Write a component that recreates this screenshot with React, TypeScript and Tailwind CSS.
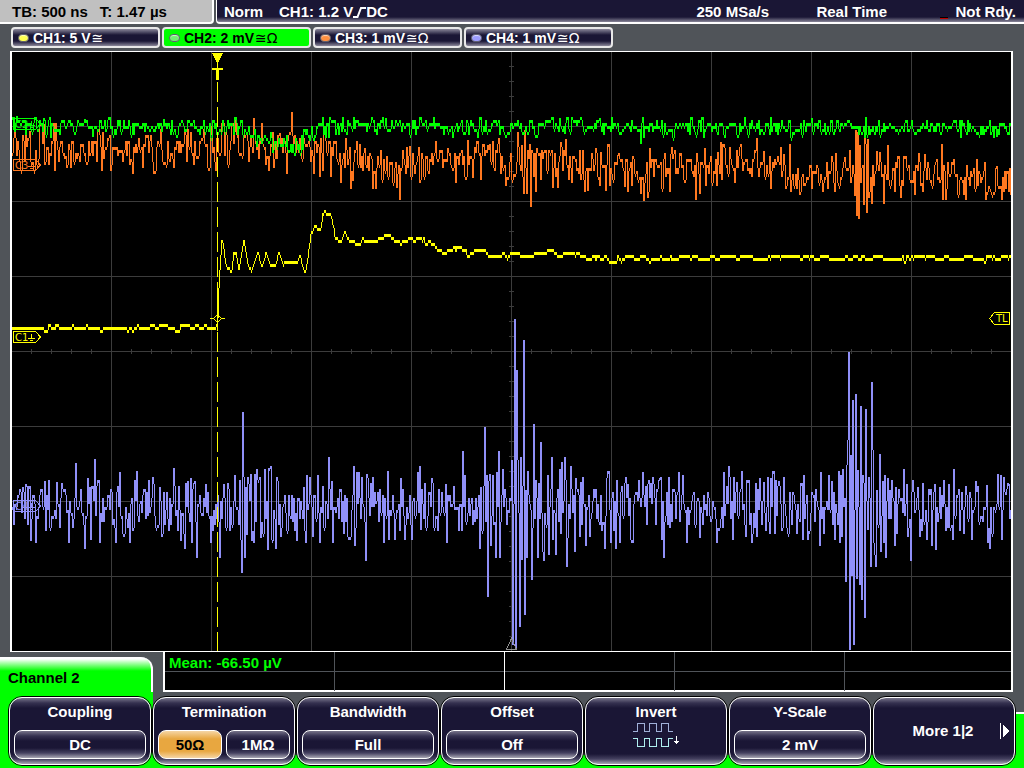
import type { ReactNode } from "react";
import clsx from "clsx";

type Point = [number, number];

const PLOT = { left: 12, top: 52, right: 1011, bottom: 651 };

const CHANNELS = [
    { id: "CH1", scale: "5 V", coupling: "≅", dot: "bg-[#ffff50]" },
    { id: "CH2", scale: "2 mV", coupling: "≅Ω", dot: "bg-[#70f070]", active: true },
    { id: "CH3", scale: "1 mV", coupling: "≅Ω", dot: "bg-[#ff9040]" },
    { id: "CH4", scale: "1 mV", coupling: "≅Ω", dot: "bg-[#9c9cff]" },
];

const C1_SHAPE: Point[] = [
    [12, 327], [216, 327], [217, 320], [218, 289], [219, 271], [221, 241], [222, 243], [225, 265], [227, 269], [231, 268], [233, 251], [235, 251], [238, 269], [241, 252], [243, 241],
    [247, 264], [251, 269], [257, 251], [261, 266], [265, 253], [268, 264], [275, 265], [278, 253], [282, 265], [285, 260], [292, 260], [296, 263], [299, 257],
    [304, 275], [307, 258], [310, 235], [314, 224], [317, 230], [320, 228], [322, 212], [328, 212], [331, 219], [334, 235], [338, 241], [341, 241], [344, 230],
    [348, 239], [352, 242], [357, 244], [363, 236], [370, 241], [382, 239], [387, 235], [395, 242], [405, 239], [415, 239], [417, 234], [423, 241], [427, 244],
    [432, 242], [437, 249], [442, 253], [447, 251], [452, 247], [460, 247], [466, 252], [470, 255], [479, 251], [490, 253], [507, 255], [520, 253], [530, 254],
    [540, 251], [553, 251], [560, 253], [571, 251], [582, 255], [600, 257], [1011, 257],
];

const C2_SHAPE: Point[] = [
    [12, 126], [40, 125], [60, 127], [200, 127], [243, 127], [252, 135], [262, 139], [272, 144], [300, 145], [305, 137], [312, 132], [325, 130], [345, 126], [430, 125], [450, 128], [520, 127], [560, 125], [610, 125], [650, 127], [1011, 128],
];

const C3_SHAPE: Point[] = [
    [12, 148], [70, 150], [150, 150], [200, 146], [260, 144], [310, 147], [330, 150], [345, 163], [400, 168], [430, 163], [470, 158], [512, 162], [560, 163],
    [610, 168], [650, 170], [700, 172], [740, 163], [775, 166], [800, 177], [850, 172], [880, 172], [910, 176], [935, 168], [960, 178], [1011, 180],
];

const C4_SHAPE: Point[] = [[12, 507], [1011, 507]];

// Samples that stand out of the noise, as [x, y]
const C2_SPIKES: Point[] = [[17, 116], [44, 118], [85, 119], [93, 137], [164, 119], [290, 152], [386, 118], [453, 138], [560, 118], [565, 134], [600, 118], [641, 144], [644, 138], [704, 138], [725, 138], [812, 118], [865, 138], [997, 137]];

const C3_SPIKES: Point[] = [
    [15, 132], [30, 131], [44, 124], [55, 171], [102, 171], [133, 174], [143, 168], [188, 129], [194, 165], [236, 118], [254, 118], [280, 133], [292, 112], [293, 136],
    [314, 174], [320, 177], [331, 177], [353, 181], [365, 148], [373, 189], [376, 189], [397, 188], [400, 200], [407, 147], [410, 146], [420, 183], [448, 148],
    [456, 183], [468, 140], [473, 178], [488, 145], [512, 180], [522, 145], [524, 194], [525, 130], [527, 194], [528, 150], [531, 207], [532, 150], [536, 192], [537, 148], [541, 180], [544, 152],
    [553, 188], [558, 188], [561, 142], [566, 139], [588, 191], [596, 148], [601, 152], [606, 191], [618, 155], [625, 187], [641, 194], [644, 201], [650, 148],
    [671, 154], [674, 154], [696, 200], [700, 194], [705, 148], [718, 152], [721, 142], [725, 148], [756, 151], [764, 151], [771, 189], [784, 154], [801, 192], [845, 157],
    [855, 196], [856, 130], [857, 216], [858, 132], [859, 219], [860, 145], [864, 205], [865, 130], [867, 213], [868, 139], [869, 198], [872, 204], [877, 151], [880, 152], [884, 204],
    [888, 145], [901, 198], [905, 157], [925, 154], [943, 200], [946, 200], [966, 200], [986, 200], [997, 166], [1002, 200],
];

const C4_SPIKES: Point[] = [
    [23, 487], [26, 484], [36, 543], [31, 541], [45, 481], [57, 482], [69, 543], [76, 463], [88, 478], [90, 487], [91, 540], [120, 472], [135, 480], [137, 471], [128, 528], [154, 484], [160, 487], [163, 534],
    [181, 541], [188, 481], [191, 478], [192, 543], [195, 481], [197, 558], [206, 484], [211, 543], [220, 558], [224, 484], [235, 475], [240, 480], [242, 573], [243, 412], [245, 558], [246, 487], [247, 535],
    [241, 540], [249, 484], [252, 541], [257, 469], [261, 538], [265, 469], [268, 550], [271, 466], [273, 541], [278, 481], [281, 537], [297, 541], [304, 487], [306, 543], [307, 475], [313, 537], [318, 475],
    [320, 543], [329, 457], [332, 481], [333, 543], [354, 466], [355, 546], [357, 472], [359, 472], [366, 561], [368, 478], [384, 543], [389, 540], [401, 478], [418, 472], [420, 466], [421, 530],
    [432, 478], [447, 543], [446, 484], [463, 451], [465, 475], [480, 549], [481, 487], [485, 427], [486, 522], [487, 475], [488, 597], [489, 481], [491, 546], [493, 475], [494, 525], [496, 558], [497, 472],
    [499, 451], [500, 558], [503, 469], [512, 460], [513, 645], [515, 319], [516, 650], [517, 370], [518, 460], [520, 627], [521, 457], [522, 560], [524, 340], [525, 615], [526, 490], [527, 558], [528, 471],
    [532, 580], [534, 424], [536, 480], [538, 558], [541, 442], [543, 552], [544, 561], [548, 475], [549, 555], [552, 457], [553, 540], [556, 555], [560, 469], [561, 534], [565, 457], [567, 567], [568, 538],
    [571, 466], [575, 552], [576, 478], [581, 482], [586, 546], [590, 537], [607, 478], [611, 543], [616, 549], [628, 484], [633, 543], [643, 472], [648, 484], [654, 484], [660, 478], [664, 558], [679, 472],
    [683, 475], [700, 538], [724, 472], [729, 466], [733, 540], [737, 482], [746, 537], [752, 543], [760, 478], [764, 482], [770, 534], [771, 478], [775, 534], [779, 481], [797, 534], [804, 475], [808, 540],
    [821, 472], [829, 475], [832, 481], [840, 543], [841, 475], [843, 469], [846, 582], [847, 465], [848, 440], [849, 352], [850, 650], [851, 455], [852, 576], [853, 400], [854, 645], [856, 394], [857, 579],
    [858, 470], [860, 585], [861, 406], [862, 600], [863, 475], [865, 618], [866, 409], [868, 530], [871, 567], [872, 382], [873, 450], [875, 555], [876, 567], [877, 490], [880, 454], [881, 552], [883, 481],
    [885, 475], [886, 558], [888, 478], [890, 490], [895, 546], [896, 487], [904, 469], [907, 484], [908, 537], [911, 561], [918, 487], [920, 537], [927, 540], [936, 550], [935, 484], [940, 487], [949, 484],
    [953, 540], [954, 469], [964, 534], [976, 481], [988, 543], [987, 485], [1001, 475], [1002, 540], [1009, 484],
];

const seededRandom = (seed: number) => () => {
    seed = (seed + 0x6d2b79f5) | 0;
    let t = Math.imul(seed ^ (seed >>> 15), 1 | seed);
    t = (t + Math.imul(t ^ (t >>> 7), 61 | t)) ^ t;
    return ((t ^ (t >>> 14)) >>> 0) / 4294967296;
};

const interpolate = (shape: Point[], x: number) => {
    const i = Math.max(1, shape.findIndex(([px]) => px >= x));
    const [x0, y0] = shape[i - 1];
    const [x1, y1] = shape[i];
    return y0 + ((y1 - y0) * (x - x0)) / (x1 - x0);
};

// One vertical stroke per pixel column, levels are quantised to 3px steps
const buildTrace = (shape: Point[], noise: number, seed: number, rate: number, spikes: Point[] = []) => {
    const random = seededRandom(seed);
    const peaks = new Map(spikes);
    let offset = 0;
    let prev: number | null = null;
    let d = "";
    for (let x = PLOT.left; x < PLOT.right; x++) {
        if (random() < rate) offset = (random() + random() + random() - 1.5) * noise;
        const y = peaks.get(x + 1) ?? Math.round((interpolate(shape, x) + offset) / 3) * 3;
        const from = Math.min(y, prev ?? y);
        const to = Math.max(y, prev ?? y, from + 3);
        d += `M${x + 0.5} ${from}V${Math.min(to, PLOT.bottom)}`;
        prev = y;
    }
    return d;
};

const TRACES = [
    { color: "#9090f8", d: buildTrace(C4_SHAPE, 34, 41, 0.85, C4_SPIKES) },
    { color: "#ff7820", d: buildTrace(C3_SHAPE, 22, 7, 0.8, C3_SPIKES) },
    { color: "#00ff00", d: buildTrace(C2_SHAPE, 9, 13, 0.75, C2_SPIKES) },
    { color: "#ffff00", d: buildTrace(C1_SHAPE, 3, 5, 0.35) },
];

const GROUND_TAGS = [
    { label: "C2", y: 118, color: "#00ff00" },
    { label: "C3", y: 159, color: "#ff7820" },
    { label: "C1", y: 331, color: "#ffff00" },
    { label: "C4", y: 500, color: "#9090f8" },
];

const range = (from: number, to: number, step: number) => Array.from({ length: Math.floor((to - from) / step) + 1 }, (_, i) => from + i * step);

const GRID = [
    ...range(111, 911, 100).map((x) => `M${x}.5 52V651`),
    ...range(126, 576, 75).map((y) => `M12 ${y}.5H1011`),
    ...range(66, 636, 15).map((y) => `M509 ${y}.5H514`),
    ...range(31, 991, 20).map((x) => `M${x}.5 349V354`),
].join("");

const Display = () => (
    <svg viewBox="12 52 999 599" preserveAspectRatio="none" shapeRendering="crispEdges" fill="none" className="block h-[599px] w-full bg-black font-normal" role="img" aria-label="Waveforms">
        <path d={GRID} stroke="#3c3c3c" />
        {TRACES.map((trace) => (
            <path key={trace.color} d={trace.d} stroke={trace.color} />
        ))}
        {GROUND_TAGS.map((tag) => (
            <g key={tag.label} stroke={tag.color}>
                <path d={`M13.5 ${tag.y + 0.5}h22l5 5.5l-5 5.5h-22z`} />
                <path d={`M31.5 ${tag.y + 3}v5M28 ${tag.y + 7.5}h7M30 ${tag.y + 9.5}h3`} />
                <text x="15" y={tag.y + 10} fill={tag.color} stroke="none" fontSize="10" fontFamily="DejaVu Sans, sans-serif">
                    {tag.label}
                </text>
            </g>
        ))}
        <g stroke="#ffff00">
            <path d="M217.5 82V651" strokeDasharray="20 5" />
            <path d="M217.5 286V331" />
            <path d="M212 53h11l-5 10h-1z" fill="#ffff00" stroke="none" />
            <path d="M217.5 63v5M212 68.5h11M212 69.5h11M217.5 68v12M216.5 68v12M218.5 68v12" />
            <path d="M210 318.5h4M221 318.5h4M213.5 318.5l4-4l4 4l-4 4z" />
            <path d="M1009.5 312.5v12h-15l-5-6l5-6z" />
            <text x="996" y="322" fill="#ffff00" stroke="none" fontSize="10" fontFamily="DejaVu Sans, sans-serif">
                TL
            </text>
        </g>
        <path d="M506.5 649.5h10l-5-11z" stroke="#909090" />
    </svg>
);

const PANEL_FADE = "bg-[linear-gradient(to_bottom,#77748a,#353150_5px,#1a1635_10px,#1a1635_calc(100%-10px),#454160_calc(100%-5px),#aaa8b5)]";

const MenuKey = ({ title, children }: { title: string; children: ReactNode }) => (
    <div className="h-[70px] flex-1 rounded-[14px] border border-black">
        <div className={clsx("flex h-full flex-col items-center rounded-[13px] border border-white px-1 text-white", PANEL_FADE)}>
            <span className="mt-1 leading-5">{title}</span>
            <div className="mt-2 flex w-full gap-1">{children}</div>
        </div>
    </div>
);

const ValueButton = ({ selected, children }: { selected?: boolean; children: ReactNode }) => (
    <button
        type="button"
        className={clsx(
            "h-[29px] flex-1 rounded-lg border border-white leading-none",
            selected ? "bg-[linear-gradient(to_bottom,#f5d5a5,#e8a740_8px,#e8a740_20px,#f5d5a5)] text-black" : clsx("text-white", PANEL_FADE),
        )}
    >
        {children}
    </button>
);

const InvertIcon = () => (
    <svg width="48" height="26" viewBox="0 0 48 26" fill="none" shapeRendering="crispEdges" className="mx-auto -mt-2">
        <path d="M1 9.500h4v-8h7v8h5v-8h7v8h5v-8h7v8h5" stroke="#a0b0d8" />
        <path d="M1 16.500h4v8h7v-8h5v8h7v-8h5v8h7v-8h5" stroke="#b0f0f0" />
        <path d="M44.500 14v8M42 19.500h5M43 20.500h3" stroke="#fff" />
    </svg>
);

export default function App() {
    return (
        <div className="flex min-h-screen flex-col bg-[#505459] font-['Liberation_Sans',Arial,sans-serif] text-[15px] font-bold whitespace-nowrap">
            <header className="flex h-6 gap-[2px] leading-6">
                <div className="flex w-[214px] gap-3 rounded-br border-r-2 border-b-2 border-white bg-[#c0c0c0] pl-3 text-black">
                    <span>TB: 500 ns</span>
                    <span>T: 1.47 µs</span>
                </div>
                <div className="flex flex-1 rounded-bl border-b-2 border-l border-white bg-[linear-gradient(to_bottom,#1a1635_17px,#8a879a)] pr-2 pl-[7px] text-white">
                    <span className="w-[55px]">Norm</span>
                    <span>CH1: 1.2 V</span>
                    <svg width="13" height="13" viewBox="0 0 13 13" fill="none" stroke="currentColor" strokeWidth="2" className="mt-[6px]">
                        <path d="M0 11h4.500L8 2h5" />
                    </svg>
                    <span>DC</span>
                    <span className="ml-auto w-[120px]">250 MSa/s</span>
                    <span className="w-[124px]">Real Time</span>
                    <span className="mt-[17px] mr-[7px] h-[2px] w-2 border-b border-[#c00000] bg-black" />
                    <span>Not Rdy.</span>
                </div>
            </header>

            <nav className="flex gap-[2px] px-[11px] pt-[3px] pb-[3px] text-sm">
                {CHANNELS.map((channel) => (
                    <button
                        key={channel.id}
                        type="button"
                        className={clsx(
                            "flex h-[21px] w-[149px] items-center rounded border-2 border-[#e8e8e8] pl-[5px] leading-none",
                            channel.active ? "bg-[#00ff00] text-black" : "bg-[linear-gradient(to_bottom,#8a879a,#1a1635_6px,#1a1635_12px,#8a879a)] text-white",
                        )}
                    >
                        <span className={clsx("mr-1 h-2 w-[11px] rounded-full border border-[#606070] shadow-[inset_0_1px_1px_#ffffffa0]", channel.dot)} />
                        {channel.id}: {channel.scale}
                        <span className="ml-px font-['DejaVu_Sans',sans-serif] text-sm leading-none font-normal">{channel.coupling}</span>
                    </button>
                ))}
            </nav>

            <main className="mr-[11px] ml-[10px] border-x-2 border-y border-white">
                <Display />
            </main>

            <section className="flex h-10 pr-[11px]">
                <h1 className="mt-[5px] mr-[10px] w-[153px] rounded-tr-xl border-r-2 border-white bg-[linear-gradient(to_bottom,#fff_2px,#00ff00_14px)] pt-[11px] pl-2 text-[15px] leading-5">Channel 2</h1>
                <div className="grid flex-1 grid-cols-[repeat(4,170px)_1fr] grid-rows-2 border-r-2 border-b-2 border-l-2 border-white bg-black leading-[22px] text-[#00ff00]">
                    {range(0, 9, 1).map((i) => (
                        <div key={i} className={clsx("h-5 pl-1", i < 5 && "border-b border-b-[#505459]", i % 5 < 4 && "border-r", i % 5 === 1 ? "border-r-white" : "border-r-[#505459]")}>
                            {i === 0 && "Mean: -66.50 µV"}
                        </div>
                    ))}
                </div>
            </section>

            <footer className="flex h-[76px] px-2 pt-1 [background:linear-gradient(#0f0,#0f0)_left/153px_100%_no-repeat,linear-gradient(#fff_2px,#0f0_2px)_right_bottom/8px_56px_no-repeat,linear-gradient(#0f0,#0f0)_bottom/100%_13px_no-repeat,#505459]">
                <MenuKey title="Coupling">
                    <ValueButton>DC</ValueButton>
                </MenuKey>
                <MenuKey title="Termination">
                    <ValueButton selected>50Ω</ValueButton>
                    <ValueButton>1MΩ</ValueButton>
                </MenuKey>
                <MenuKey title="Bandwidth">
                    <ValueButton>Full</ValueButton>
                </MenuKey>
                <MenuKey title="Offset">
                    <ValueButton>Off</ValueButton>
                </MenuKey>
                <MenuKey title="Invert">
                    <InvertIcon />
                </MenuKey>
                <MenuKey title="Y-Scale">
                    <ValueButton>2 mV</ValueButton>
                </MenuKey>
                <button type="button" className="h-[70px] flex-1 rounded-[14px] border border-black">
                    <span className={clsx("flex h-full items-center rounded-[13px] border border-white pr-1 pl-6 text-white", PANEL_FADE)}>
                        <span className="flex-1 text-center">More 1|2</span>
                        <svg width="10" height="16" viewBox="0 0 10 16" className="ml-3" shapeRendering="crispEdges">
                            <path d="M0 0h1v16H0zM3 2l6 6l-6 6z" fill="#fff" />
                        </svg>
                    </span>
                </button>
            </footer>
        </div>
    );
}
